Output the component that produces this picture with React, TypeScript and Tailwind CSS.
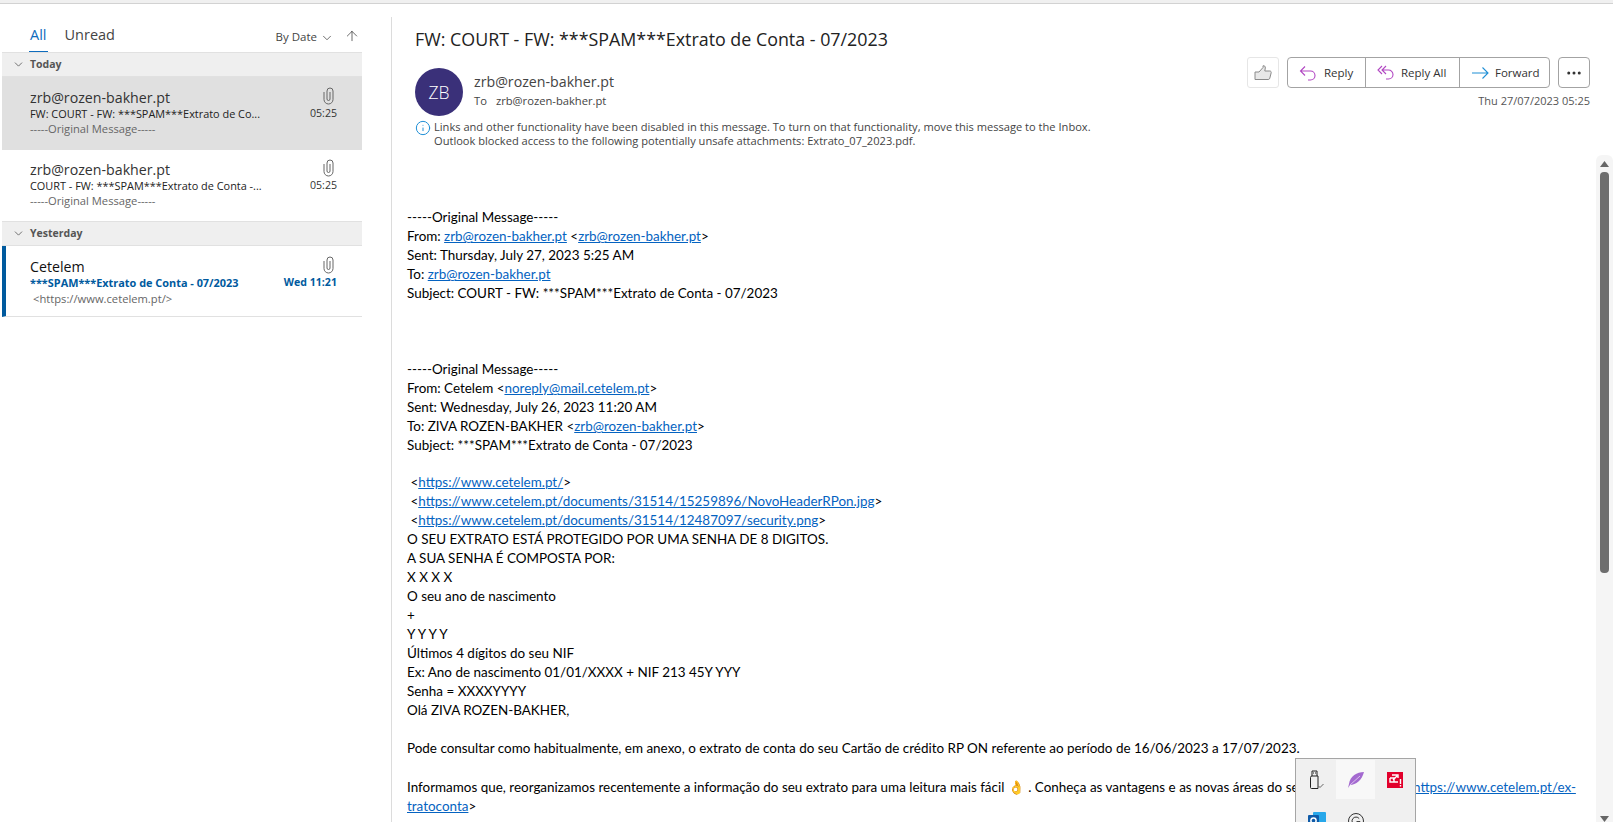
import React from "react";
import { ChevronDown, ArrowUp, Info, MoreHorizontal } from "lucide-react";

const ui = "font-['Open_Sans',sans-serif]";

function Clip() {
  return (
    <svg width="11" height="18" viewBox="0 0 11 18" fill="none" stroke="#666" strokeWidth="1">
      <path d="M1 5v7.5a4.5 4.5 0 0 0 9 0V4a3 3 0 0 0-6 0v8a1.5 1.5 0 0 0 3 0V5" />
    </svg>
  );
}

function GroupHeader({ label }: { label: string }) {
  return (
    <div className="flex h-[25px] items-center border-t border-b border-[#e1e1e1] bg-[#efefef] pl-[10px]">
      <ChevronDown size={13} strokeWidth={1.5} className="text-[#555]" />
      <span className="ml-[5px] text-[10.5px] font-bold text-[#555]">{label}</span>
    </div>
  );
}

function Row({ sender, subject, time, preview, cls, previewCls, blue }: { sender: string; subject: string; time: string; preview: string; cls: string; previewCls?: string; blue?: boolean }) {
  return (
    <div className={`flex flex-col pr-[25px] ${cls}`}>
      <div className="flex h-[19px] items-center justify-between">
        <span className={`text-[14.2px] ${blue ? "text-[#111]" : "text-[#333]"}`}>{sender}</span>
        <span className="mr-[3px] mt-[-3px]"><Clip /></span>
      </div>
      <div className="mt-[-1px] flex h-[16px] items-center justify-between whitespace-nowrap">
        <span className={`text-[10.9px] ${blue ? "font-bold text-[#005a9e]" : "text-[#222]"}`}>{subject}</span>
        <span className={`text-[10.6px] ${blue ? "font-bold text-[#005a9e]" : "text-[#333]"}`}>{time}</span>
      </div>
      <div className={`h-[15px] text-[11.2px] leading-[15px] text-[#666] ${previewCls ?? ""}`}>{preview}</div>
    </div>
  );
}

function A({ children }: { children: React.ReactNode }) {
  return <a className="text-[#0563c1] underline">{children}</a>;
}

const lineCls = "h-[19px] whitespace-nowrap";

function ReplyIcon() {
  return (
    <svg width="18" height="18" viewBox="0 0 18 18" fill="none" stroke="#b146c2" strokeWidth="1.1">
      <path d="M6 2.5 1.5 7 6 11.5M1.5 7h10a4.5 4.5 0 0 1 4.5 4.5 4.5 4.5 0 0 1-4.5 4.5H9" />
    </svg>
  );
}
function ReplyAllIcon() {
  return (
    <svg width="18" height="18" viewBox="0 0 18 18" fill="none" stroke="#b146c2" strokeWidth="1.1">
      <path d="M5 2 1 6l4 4M9 2 5 6l4 4M5 6h6.5a4.5 4.5 0 0 1 4.5 4.5 4.5 4.5 0 0 1-4.5 4.5H9" />
    </svg>
  );
}
function ForwardIcon() {
  return (
    <svg width="18" height="18" viewBox="0 0 18 18" fill="none" stroke="#1f8fd6" strokeWidth="1.1">
      <path d="M11.5 3.5 17 9l-5.5 5.5M1 9h16" />
    </svg>
  );
}
function Thumb() {
  return (
    <svg width="18" height="16" viewBox="0 0 18 16" fill="#e8e8e8" stroke="#8a8a8a" strokeWidth="1">
      <path d="M1 7h4l4-4.5V.8c1.5-.3 2.5.6 2.3 2.2L10.8 6h5c1 0 1.6.8 1.4 1.7l-1.4 5.5c-.2.8-.8 1.3-1.6 1.3H5L1 14.5z" />
    </svg>
  );
}

export default function App() {
  return (
    <div className={`h-[822px] w-[1613px] overflow-hidden bg-white ${ui} relative flex flex-col`}>
      <div className="h-[4px] shrink-0 border-b border-[#d2d2d2] bg-[#f0f0f0]" />
      <div className="flex min-h-0 flex-1">
        {/* left list */}
        <div className="w-[392px] shrink-0 pt-[13px]">
          <div className="h-full border-r border-[#dcdcdc] pl-[2px] pr-[29px]">
            <div className="flex h-[35px] items-start">
              <div className="ml-[27px] flex h-[35px] flex-col items-center border-b-[1.5px] border-[#0f6cbd] px-[1px]">
                <span className="mt-[7px] text-[14.5px] text-[#0f6cbd]">All</span>
              </div>
              <span className="ml-[17px] mt-[7px] text-[14.5px] text-[#444]">Unread</span>
              <span className="ml-auto mt-[11px] text-[11.5px] text-[#444]">By Date</span>
              <ChevronDown size={14} strokeWidth={1.2} className="ml-[3px] mt-[14px] text-[#333]" />
              <ArrowUp size={16} strokeWidth={1} className="ml-[10px] mt-[11px] mr-[2px] text-[#222]" />
            </div>
            <GroupHeader label="Today" />
            <Row sender="zrb@rozen-bakher.pt" subject="FW: COURT - FW: ***SPAM***Extrato de Co..." time="05:25" preview="-----Original Message-----" cls="h-[73px] bg-[#e0e0e0] pl-[28px] pt-[11px]" previewCls="mt-[-1px]" />
            <Row sender="zrb@rozen-bakher.pt" subject="COURT - FW: ***SPAM***Extrato de Conta -..." time="05:25" preview="-----Original Message-----" cls="h-[71px] bg-white pl-[28px] pt-[10px]" previewCls="mt-[-1px]" />
            <GroupHeader label="Yesterday" />
            <Row sender="Cetelem" subject="***SPAM***Extrato de Conta - 07/2023" time="Wed 11:21" preview=" <https://www.cetelem.pt/>" cls="h-[71px] border-b border-l-4 border-b-[#e1e1e1] border-l-[#005a9e] pl-[24px] pt-[11px]" previewCls="pl-[3px]" blue />
          </div>
        </div>
        {/* reading pane */}
        <div className="flex min-w-0 flex-1 flex-col">
          <div className="relative h-[151px] shrink-0 pl-[23px] pr-[23px] pt-[23px]">
            <div className="text-[17.85px] leading-[24px] text-[#222]">FW: COURT - FW: ***SPAM***Extrato de Conta - 07/2023</div>
            <div className="mt-[17px] flex justify-between">
              <div className="flex">
                <div className="flex h-[48px] w-[48px] items-center justify-center rounded-full bg-[#3a3079] text-[17.5px] font-light text-white">ZB</div>
                <div className="ml-[11px]">
                  <div className="mt-[4px] text-[14.2px] leading-[19px] text-[#444]">zrb@rozen-bakher.pt</div>
                  <div className="mt-[2px] flex text-[11.2px] leading-[15px] text-[#444]">
                    <span>To</span><span className="ml-[9px]">zrb@rozen-bakher.pt</span>
                  </div>
                </div>
              </div>
              <div className="mt-[-11px] flex flex-col items-end">
                <div className="flex">
                  <div className="mr-[8px] flex h-[31px] w-[32px] items-center justify-center rounded-[3px] border border-[#e6e6e6]"><Thumb /></div>
                  <div className="flex h-[31px] rounded-[4px] border border-[#a3a3a3] text-[11.5px] text-[#333]">
                    <div className="flex w-[77px] items-center gap-[7px] pl-[11px]"><ReplyIcon />Reply</div>
                    <div className="flex w-[94px] items-center gap-[6px] border-l border-[#a3a3a3] pl-[11px]"><ReplyAllIcon />Reply All</div>
                    <div className="flex w-[90px] items-center gap-[6px] border-l border-[#a3a3a3] pl-[11px]"><ForwardIcon />Forward</div>
                  </div>
                  <div className="ml-[8px] flex h-[31px] w-[32px] items-center justify-center rounded-[4px] border border-[#a3a3a3]"><MoreHorizontal size={18} strokeWidth={2} className="text-[#333]" /></div>
                </div>
                <div className="mt-[5px] text-[11px] leading-[15px] text-[#555]">Thu 27/07/2023 05:25</div>
              </div>
            </div>
            <div className="absolute left-[23px] top-[116px] flex text-[11.1px] leading-[14px] text-[#444]">
              <Info size={16} strokeWidth={1.5} className="mr-[3px] text-[#1f8fd6]" />
              <div>
                <div>Links and other functionality have been disabled in this message. To turn on that functionality, move this message to the Inbox.</div>
                <div>Outlook blocked access to the following potentially unsafe attachments: Extrato_07_2023.pdf.</div>
              </div>
            </div>
          </div>
          <div className="flex min-h-0 flex-1">
            <div className="min-w-0 flex-1 overflow-hidden pl-[15px] pt-[52px] font-['Lato',sans-serif] text-[13.45px] text-black">
              <div className={lineCls}>-----Original Message-----</div>
              <div className={lineCls}>From: <A>zrb@rozen-bakher.pt</A> &lt;<A>zrb@rozen-bakher.pt</A>&gt;</div>
              <div className={lineCls}>Sent: Thursday, July 27, 2023 5:25 AM</div>
              <div className={lineCls}>To: <A>zrb@rozen-bakher.pt</A></div>
              <div className={lineCls}>Subject: COURT - FW: ***SPAM***Extrato de Conta - 07/2023</div>
              <div className="h-[57px]" />
              <div className={lineCls}>-----Original Message-----</div>
              <div className={lineCls}>From: Cetelem &lt;<A>noreply@mail.cetelem.pt</A>&gt;</div>
              <div className={lineCls}>Sent: Wednesday, July 26, 2023 11:20 AM</div>
              <div className={lineCls}>To: ZIVA ROZEN-BAKHER &lt;<A>zrb@rozen-bakher.pt</A>&gt;</div>
              <div className={lineCls}>Subject: ***SPAM***Extrato de Conta - 07/2023</div>
              <div className="h-[18px]" />
              <div className={lineCls}>&nbsp;&lt;<A>https://www.cetelem.pt/</A>&gt;</div>
              <div className={lineCls}>&nbsp;&lt;<A>https://www.cetelem.pt/documents/31514/15259896/NovoHeaderRPon.jpg</A>&gt;</div>
              <div className={lineCls}>&nbsp;&lt;<A>https://www.cetelem.pt/documents/31514/12487097/security.png</A>&gt;</div>
              <div className={lineCls}>O SEU EXTRATO ESTÁ PROTEGIDO POR UMA SENHA DE 8 DIGITOS.</div>
              <div className={lineCls}>A SUA SENHA É COMPOSTA POR:</div>
              <div className={lineCls}>X X X X</div>
              <div className={lineCls}>O seu ano de nascimento</div>
              <div className={lineCls}>+</div>
              <div className={lineCls}>Y Y Y Y</div>
              <div className={lineCls}>Últimos 4 dígitos do seu NIF</div>
              <div className={lineCls}>Ex: Ano de nascimento 01/01/XXXX + NIF 213 45Y YYY</div>
              <div className={lineCls}>Senha = XXXXYYYY</div>
              <div className={lineCls}>Olá ZIVA ROZEN-BAKHER,</div>
              <div className="h-[19px]" />
              <div className={lineCls}>Pode consultar como habitualmente, em anexo, o extrato de conta do seu Cartão de crédito RP ON referente ao período de 16/06/2023 a 17/07/2023.</div>
              <div className="h-[20px]" />
              <div className={lineCls}>Informamos que, reorganizamos recentemente a informação do seu extrato para uma leitura mais fácil 👌 . Conheça as vantagens e as novas áreas do seu extrato aqui em &lt;<A>https://www.cetelem.pt/ex-</A></div>
              <div className={lineCls}><A>tratoconta</A>&gt;</div>
            </div>
            <div className="flex w-[17px] shrink-0 flex-col items-center rounded-t-[6px] bg-[#f5f5f5] pt-[6px]">
              <svg width="9" height="6" viewBox="0 0 9 6"><path d="M4.5 0 9 6H0z" fill="#666" /></svg>
              <div className="mt-[5px] h-[401px] w-[9px] rounded-[4px] bg-[#6e6e6e]" />
              <div className="flex-1" />
              <svg width="9" height="6" viewBox="0 0 9 6"><path d="M0 0h9L4.5 6z" fill="#666" /></svg>
            </div>
          </div>
        </div>
      </div>
      {/* tray overflow popup */}
      <div className="absolute left-[1295px] top-[758px] grid h-[90px] w-[121px] grid-cols-3 content-start border border-[#a5a5a5] bg-[#f0f0f0] p-[1px]">
        <div className="flex h-[39px] items-center justify-center">
          <svg width="18" height="20" viewBox="0 0 18 20" fill="none" stroke="#222" strokeWidth="1"><path d="M4 6h6v12.5H3.5a1 1 0 0 1-1-1V7.5A1.5 1.5 0 0 1 4 6zM4 6V1h5v5M5 3h1M7 3h1" /><path d="M10.5 16l1.5 1.5 3.5-3.5" stroke="#666" /></svg>
        </div>
        <div className="flex h-[39px] items-center justify-center bg-[#f8f8f8]">
          <svg width="18" height="18" viewBox="0 0 18 18"><path d="M17 1C10 1 3 5 2 13l-1 4 2-3c6 0 12-5 14-13z" fill="#a46ad0" /><path d="M13 5 3 14" stroke="#e8d8f4" strokeWidth="0.8" /></svg>
        </div>
        <div className="flex h-[39px] items-center justify-center">
          <svg width="16" height="16" viewBox="0 0 16 16">
            <rect width="16" height="16" fill="#e2002b" />
            <path d="M5 3h6v3M3 6h4v4h4M3 6v4h4M6 8 10 4" fill="none" stroke="#fff" strokeWidth="1.4" />
            <path d="M13.5 7v5M13.5 13v1.5" stroke="#fff" strokeWidth="1.4" />
          </svg>
        </div>
        <div className="flex h-[39px] items-start justify-center pt-[13px]">
          <svg width="18" height="16" viewBox="0 0 18 16">
            <rect x="5" y="0" width="13" height="16" rx="1" fill="#28a8ea" />
            <rect x="0" y="3" width="11" height="11" rx="1" fill="#0f5ba8" />
            <circle cx="5.5" cy="8.5" r="2.6" fill="none" stroke="#fff" strokeWidth="1.5" />
          </svg>
        </div>
        <div className="flex h-[39px] items-start justify-center pt-[14px]">
          <svg width="16" height="16" viewBox="0 0 16 16" fill="none" stroke="#333" strokeWidth="1">
            <circle cx="8" cy="8" r="7.5" />
            <path d="M11.2 5.6A4 4 0 1 0 12 8.6H8.5" />
          </svg>
        </div>
      </div>
    </div>
  );
}
